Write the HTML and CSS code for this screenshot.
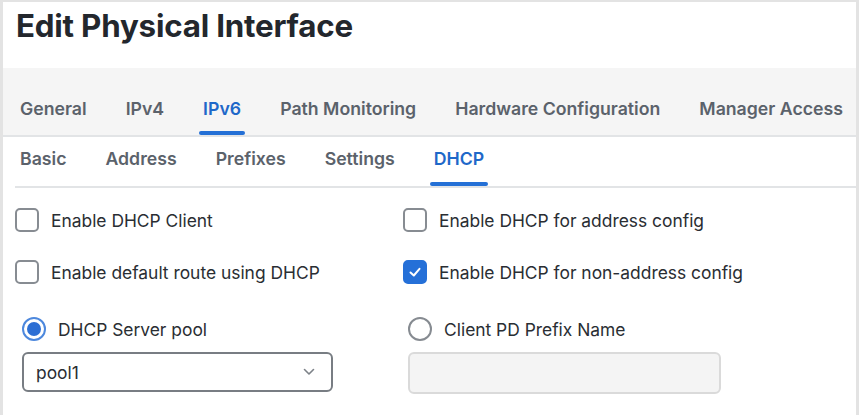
FILE: index.html
```html
<!DOCTYPE html>
<html>
<head>
<meta charset="utf-8">
<link rel="stylesheet" href="styles.css">
</head>
<body>
<div class="panel">
  <div class="header"><h1 class="title">Edit Physical Interface</h1></div>
  <div class="tabs">
    <div class="tab"><span class="tab-label">General</span><span class="bar"></span></div>
    <div class="tab"><span class="tab-label">IPv4</span><span class="bar"></span></div>
    <div class="tab active"><span class="tab-label">IPv6</span><span class="bar"></span></div>
    <div class="tab"><span class="tab-label">Path Monitoring</span><span class="bar"></span></div>
    <div class="tab"><span class="tab-label">Hardware Configuration</span><span class="bar"></span></div>
    <div class="tab"><span class="tab-label">Manager Access</span><span class="bar"></span></div>
  </div>
  <div class="subtabs">
    <div class="tab"><span class="tab-label">Basic</span><span class="bar"></span></div>
    <div class="tab"><span class="tab-label">Address</span><span class="bar"></span></div>
    <div class="tab"><span class="tab-label">Prefixes</span><span class="bar"></span></div>
    <div class="tab"><span class="tab-label">Settings</span><span class="bar"></span></div>
    <div class="tab active"><span class="tab-label">DHCP</span><span class="bar"></span></div>
  </div>
  <div class="form">
    <label class="check"><span class="box"></span><span class="label">Enable DHCP Client</span></label>
    <label class="check"><span class="box"></span><span class="label">Enable DHCP for address config</span></label>
    <label class="check"><span class="box"></span><span class="label">Enable default route using DHCP</span></label>
    <label class="check"><span class="box checked"><svg width="14" height="14" viewBox="0 0 14 14"><polyline points="2.5,7.5 5.8,10.5 11.5,3.8" fill="none" stroke="#fff" stroke-width="2" stroke-linecap="round" stroke-linejoin="round"/></svg></span><span class="label">Enable DHCP for non-address config</span></label>
    <div class="group">
      <label class="check"><span class="radio on"><span class="dot"></span></span><span class="label">DHCP Server pool</span></label>
      <div class="select"><span>pool1</span><svg width="12" height="8" viewBox="0 0 12 8"><polyline points="1.5,1.5 6,6 10.5,1.5" fill="none" stroke="#7d8288" stroke-width="1.6" stroke-linecap="round" stroke-linejoin="round"/></svg></div>
    </div>
    <div class="group right">
      <label class="check"><span class="radio"></span><span class="label">Client PD Prefix Name</span></label>
      <div class="input"></div>
    </div>
  </div>
</div>
</body>
</html>
```
FILE: styles.css
```css
* { box-sizing: border-box; }
html, body { margin: 0; padding: 0; }
body {
  background: #e3e3e3;
  font-family: Inter, "Noto Sans", sans-serif;
  width: 859px;
  height: 415px;
  overflow: hidden;
}
.panel {
  margin: 2px 3px 0 3px;
  background: #fff;
  height: 413px;
}
.header {
  height: 66px;
  padding: 7px 0 0 13px;
}
.title {
  margin: 0;
  font-size: 31.3px;
  font-weight: 700;
  color: #23272d;
  letter-spacing: -0.2px;
  line-height: 34px;
}
.tabs {
  background: #f5f5f5;
  height: 69px;
  border-bottom: 2px solid #e2e4e6;
  display: flex;
  align-items: flex-end;
  gap: 31px;
  padding-left: 13px;
}
.tab {
  display: flex;
  flex-direction: column;
  align-items: stretch;
  padding: 0 4px;
}
.tab-label {
  font-size: 17.7px;
  font-weight: 600;
  line-height: 22px;
  color: #5b626b;
  white-space: nowrap;
}
.bar {
  height: 4px;
  margin-top: 11px;
  margin-left: -4px;
  margin-right: -4px;
  border-radius: 2px;
  background: transparent;
}
.tab.active .tab-label { color: #1e68c9; }
.tab.active .bar { background: #2470d6; }
.subtabs {
  margin-left: 12px;
  display: flex;
  gap: 31px;
  padding-top: 11px;
  padding-left: 1px;
  border-bottom: 2px solid #e2e4e6;
}
.subtabs .bar { margin-top: 12px; }
.form {
  margin-left: 12px;
  padding-top: 20px;
  display: grid;
  grid-template-columns: 388px 1fr;
  row-gap: 28px;
}
.check {
  display: flex;
  align-items: center;
  gap: 12px;
  height: 24px;
}
.box {
  width: 24px;
  height: 24px;
  border: 2px solid #878c92;
  border-radius: 5px;
  display: flex;
  align-items: center;
  justify-content: center;
}
.box.checked {
  background: #2570d8;
  border-color: #2570d8;
}
.label {
  font-size: 17.4px;
  color: #2a2e33;
  white-space: nowrap;
}
.group {
  padding-left: 7px;
  margin-top: 5px;
}
.group.right { padding-left: 5px; }
.radio {
  width: 24px;
  height: 24px;
  border-radius: 50%;
  border: 2px solid #868b91;
  display: flex;
  align-items: center;
  justify-content: center;
}
.radio.on { border-color: #4d88dd; }
.dot {
  width: 14px;
  height: 14px;
  border-radius: 50%;
  background: #2d6fd4;
}
.select {
  margin-top: 11px;
  width: 311px;
  height: 40px;
  border: 2px solid #787d83;
  border-radius: 6px;
  display: flex;
  align-items: center;
  justify-content: space-between;
  padding: 0 16px 0 12px;
  font-size: 17.4px;
  color: #2a2e33;
}
.input {
  margin-top: 11px;
  width: 313px;
  height: 42px;
  background: #f4f4f4;
  border: 2px solid #dadada;
  border-radius: 6px;
}
```
